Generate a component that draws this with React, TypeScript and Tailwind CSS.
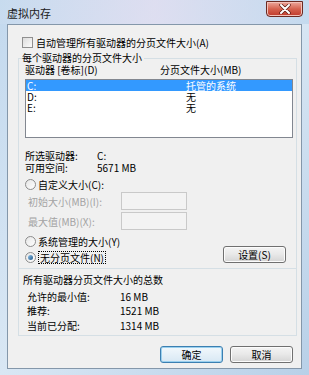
import type React from "react"

const TEXT = "text-[10px] leading-[11px] text-black"

function Radio({ checked = false }: { checked?: boolean }) {
  return (
    <span className="flex h-[11px] w-[11px] shrink-0 items-center justify-center rounded-full border border-[#8c8c8c] bg-gradient-to-br from-[#e6e6e6] to-[#ffffff]">
      {checked && (
        <span className="h-[5px] w-[5px] rounded-full bg-gradient-to-br from-[#8fc1e8] to-[#1b5a8c]" />
      )}
    </span>
  )
}

function Button({ label, focused = false }: { label: string; focused?: boolean }) {
  return (
    <div
      className={
        focused
          ? "flex h-[17px] w-[63px] items-center justify-center rounded-[3px] border border-[#3c7fb1] bg-gradient-to-b from-[#f2f8fc] to-[#d8e8f4] shadow-[inset_0_0_0_1px_#9ad0ee]"
          : "flex h-[17px] w-[63px] items-center justify-center rounded-[3px] border border-[#707070] bg-gradient-to-b from-[#f4f4f4] via-[#e8e8e8] to-[#d4d4d4] shadow-[inset_0_0_0_1px_#fcfcfc]"
      }
    >
      <span className={TEXT}>{label}</span>
    </div>
  )
}

function InfoRow({ label, value, labelWidth }: { label: string; value: string; labelWidth: string }) {
  return (
    <div className={`flex ${TEXT}`}>
      <span className={labelWidth}>{label}</span>
      <span>{value}</span>
    </div>
  )
}

function TitleBar() {
  return (
    <div className="relative flex h-[24px] items-start">
      <span className="ml-[7px] mt-[7px] text-[11px] leading-[12px] text-[#1a1a1a]">虚拟内存</span>
      <div className="absolute right-[6px] top-[1px] flex h-[16px] w-[37px] items-center justify-center rounded-b-[4px] border border-[#6b2a22] bg-gradient-to-b from-[#eba79c] via-[#d5624f] to-[#c0392b] shadow-[inset_0_0_0_1px_#f3c1b8]">
        <svg width="12" height="10" viewBox="0 0 12 10">
          <path d="M2 1 L10 9 M10 1 L2 9" stroke="#5a1c14" strokeWidth="3.4" strokeLinecap="round" />
          <path d="M2 1 L10 9 M10 1 L2 9" stroke="#ffffff" strokeWidth="2" strokeLinecap="round" />
        </svg>
      </div>
    </div>
  )
}

export default function App(): React.JSX.Element {
  return (
    <div className="relative h-[375px] w-[309px] overflow-hidden bg-gradient-to-br from-[#c3d9ee] via-[#d9e7f4] to-[#b8d0e8] font-['Noto_Sans_CJK_SC',sans-serif]">
      <div className="pointer-events-none absolute inset-x-0 top-0 h-[24px] bg-gradient-to-r from-[#c9dcef] via-[#e4ddf0] to-[#bcd5ec] opacity-70" />
      <div className="relative">
        <TitleBar />
        <div className="mx-[7px] flex h-[345px] flex-col border border-[#8497aa] bg-[#f0f0f0]">
          {/* auto manage checkbox */}
          <div className="ml-[14px] mt-[12px] flex h-[11px] items-center gap-[3px]">
            <span className="h-[11px] w-[11px] border border-[#8f8f8f] bg-gradient-to-br from-[#dcdcdc] to-[#fbfbfb]" />
            <span className={TEXT}>自动管理所有驱动器的分页文件大小(A)</span>
          </div>

          {/* per-drive group */}
          <div className="relative ml-[10px] mt-[10px] flex h-[211px] w-[279px] flex-col border border-[#d5dfe5]">
            <span className={`absolute -top-[7px] left-[3px] bg-[#f0f0f0] pr-[2px] ${TEXT}`}>
              每个驱动器的分页文件大小
            </span>
            <div className={`ml-[6px] mt-[5px] flex ${TEXT}`}>
              <span className="w-[135px]">驱动器 [卷标](D)</span>
              <span>分页文件大小(MB)</span>
            </div>
            <div className="ml-[6px] mt-[4px] h-[59px] w-[268px] border border-[#828790] bg-white">
              <div className={`flex h-[11px] bg-[#3399ff] text-white ${"text-[10px] leading-[11px]"}`}>
                <span className="w-[160px] pl-[1px]">C:</span>
                <span>托管的系统</span>
              </div>
              <div className={`flex h-[11px] ${TEXT}`}>
                <span className="w-[160px] pl-[1px]">D:</span>
                <span>无</span>
              </div>
              <div className={`flex h-[11px] ${TEXT}`}>
                <span className="w-[160px] pl-[1px]">E:</span>
                <span>无</span>
              </div>
            </div>

            <div className="ml-[6px] mt-[12px] flex flex-col gap-[1px]">
              <InfoRow label="所选驱动器:" value="C:" labelWidth="w-[72px]" />
              <InfoRow label="可用空间:" value="5671 MB" labelWidth="w-[72px]" />
            </div>

            <div className="ml-[6px] mt-[5px] flex h-[12px] items-center gap-[2px]">
              <Radio />
              <span className={TEXT}>自定义大小(C):</span>
            </div>
            <div className="ml-[9px] mt-[2px] flex h-[18px] items-center">
              <span className="w-[93px] text-[10px] leading-[11px] text-[#a3a3a3]">初始大小(MB)(I):</span>
              <span className="h-[18px] w-[66px] border border-[#c9c9c9] bg-[#f3f3f3]" />
            </div>
            <div className="ml-[9px] mt-[2px] flex h-[18px] items-center">
              <span className="w-[93px] text-[10px] leading-[11px] text-[#a3a3a3]">最大值(MB)(X):</span>
              <span className="h-[18px] w-[66px] border border-[#c9c9c9] bg-[#f3f3f3]" />
            </div>
            <div className="ml-[6px] mt-[6px] flex h-[10px] items-center gap-[2px]">
              <Radio />
              <span className={TEXT}>系统管理的大小(Y)</span>
            </div>
            <div className="ml-[6px] mr-[10px] flex h-[17px] items-end">
              <div className="flex h-[12px] items-center gap-[2px]">
                <Radio checked />
                <span className={`border border-dotted border-black px-[1px] ${TEXT}`}>无分页文件(N)</span>
              </div>
              <div className="ml-auto">
                <Button label="设置(S)" />
              </div>
            </div>
          </div>

          {/* totals group */}
          <div className="ml-[10px] flex h-[67px] w-[279px] flex-col border-x border-b border-[#d5dfe5]">
            <span className={`ml-[4px] mt-[5px] ${TEXT}`}>所有驱动器分页文件大小的总数</span>
            <div className="ml-[8px] mt-[6px]">
              <InfoRow label="允许的最小值:" value="16 MB" labelWidth="w-[93px]" />
            </div>
            <div className="ml-[8px] mt-[3px]">
              <InfoRow label="推荐:" value="1521 MB" labelWidth="w-[93px]" />
            </div>
            <div className="ml-[8px] mt-[4px]">
              <InfoRow label="当前已分配:" value="1314 MB" labelWidth="w-[93px]" />
            </div>
          </div>

          <div className="mr-[8px] mt-[10px] flex justify-end gap-[7px]">
            <Button label="确定" focused />
            <Button label="取消" />
          </div>
        </div>
      </div>
    </div>
  )
}
